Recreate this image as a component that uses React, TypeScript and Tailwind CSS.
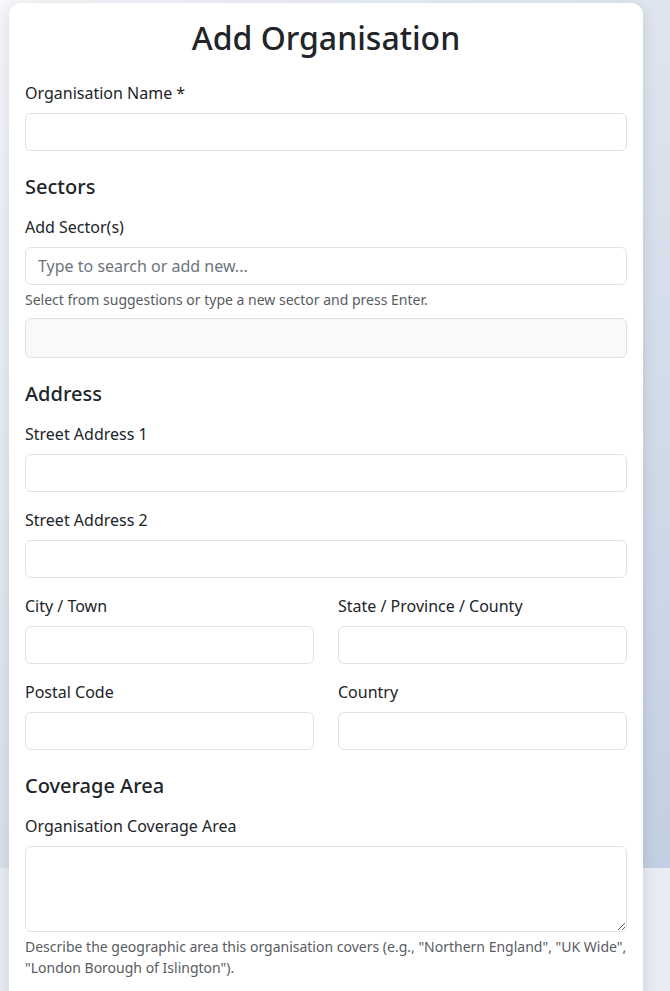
import React from 'react';

const inputCls =
  'block w-full h-[38px] px-3 rounded-[6px] border border-[#dee2e6] bg-white text-base text-[#212529] placeholder:text-[#6c757d] outline-none';

function Field({ label, className = '' }: { label: string; className?: string }) {
  return (
    <div className={`flex flex-col ${className}`}>
      <label className="text-base leading-6 text-[#212529] mb-2">{label}</label>
      <input type="text" className={inputCls} />
    </div>
  );
}

function SectionTitle({ children }: { children: React.ReactNode }) {
  return <h5 className="text-[20px] leading-6 font-medium text-[#212529] pt-2 mb-4">{children}</h5>;
}

export default function App() {
  return (
    <div
      className="min-h-screen bg-[#e9edf3] bg-[linear-gradient(135deg,#f5f7fa_0%,#c3cfe2_100%)] bg-no-repeat bg-[length:100%_868px] pl-[9px] pt-[3px] pr-[27px]"
      style={{ fontFamily: '"Noto Sans", "Liberation Sans", sans-serif' }}
    >
      <div className="bg-white rounded-[12px] shadow-[0_4px_16px_rgba(0,0,0,0.12)] px-4 pt-4 pb-12">
        {/* Header */}
        <h2 className="text-[32px] leading-[38px] font-medium text-center text-[#212529] mb-6">Add Organisation</h2>

        <Field label="Organisation Name *" className="mb-4" />

        {/* Sectors */}
        <SectionTitle>Sectors</SectionTitle>
        <div className="flex flex-col mb-4">
          <label className="text-base leading-6 text-[#212529] mb-2">Add Sector(s)</label>
          <input type="text" placeholder="Type to search or add new..." className={inputCls} />
          <p className="text-sm leading-[21px] text-[#595c5f] mt-1">
            Select from suggestions or type a new sector and press Enter.
          </p>
          <div className="mt-2 h-10 rounded-[6px] border border-[#dee2e6] bg-[#f8f9fa]" />
        </div>

        {/* Address */}
        <SectionTitle>Address</SectionTitle>
        <Field label="Street Address 1" className="mb-4" />
        <Field label="Street Address 2" className="mb-4" />
        <div className="grid grid-cols-2 gap-x-6">
          <Field label="City / Town" className="mb-4" />
          <Field label="State / Province / County" className="mb-4" />
          <Field label="Postal Code" className="mb-4" />
          <Field label="Country" className="mb-4" />
        </div>

        {/* Coverage */}
        <SectionTitle>Coverage Area</SectionTitle>
        <div className="flex flex-col">
          <label className="text-base leading-6 text-[#212529] mb-2">Organisation Coverage Area</label>
          <textarea
            rows={3}
            className="block w-full h-[86px] px-3 py-1.5 rounded-[6px] border border-[#dee2e6] bg-white text-base leading-6 text-[#212529] outline-none resize-y"
          />
          <p className="text-sm leading-[21px] text-[#595c5f] mt-1">
            Describe the geographic area this organisation covers (e.g., "Northern England", "UK Wide", "London Borough of Islington").
          </p>
        </div>
      </div>
    </div>
  );
}
